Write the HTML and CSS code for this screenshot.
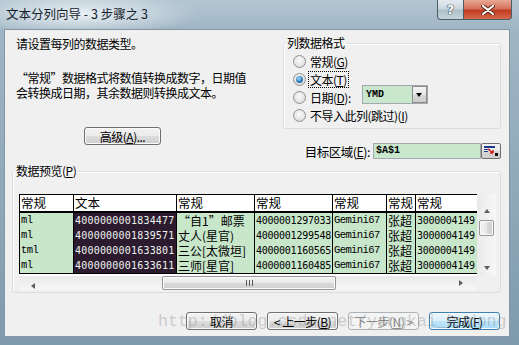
FILE: index.html
```html
<!DOCTYPE html>
<html lang="zh-CN">

<head>
  <meta charset="UTF-8" />
  <title>文本分列向导 - 3 步骤之 3</title>
  <link rel="stylesheet" href="styles.css">
</head>

<body>
  <div class="window">
    <div class="titlebar">
      <span class="title">文本分列向导 - 3 步骤之 3</span>
      <div class="caption">
        <span class="cap help">?</span>
        <span class="cap close">
          <svg width="14" height="10" viewBox="0 0 14 10">
            <path d="M2 1 L12 9 M12 1 L2 9" stroke="#5a2316" stroke-width="4" stroke-linecap="round" />
            <path d="M2 1 L12 9 M12 1 L2 9" stroke="#fff" stroke-width="2.2" stroke-linecap="round" />
          </svg>
        </span>
      </div>
    </div>

    <div class="client">
      <div class="top">
        <div class="left">
          <p class="hint">请设置每列的数据类型。</p>
          <p class="desc">“常规”数据格式将数值转换成数字，日期值<br>会转换成日期，其余数据则转换成文本。</p>
          <button class="btn advanced">高级(<u>A</u>)...</button>
        </div>

        <div class="right">
          <fieldset class="group format">
            <legend>列数据格式</legend>
            <label class="option"><span class="radio"></span>常规(<u>G</u>)</label>
            <label class="option"><span class="radio checked"></span><span class="focus">文本(<u>T</u>)</span></label>
            <label class="option">
              <span class="radio"></span><span class="date-label">日期(<u>D</u>):</span>
              <span class="combo"><span class="combo-value">YMD</span><span class="combo-btn"></span></span>
            </label>
            <label class="option"><span class="radio"></span>不导入此列(跳过)(<u>I</u>)</label>
          </fieldset>

          <div class="target">
            <span class="target-label">目标区域(<u>E</u>):</span>
            <span class="target-input">$A$1</span>
            <span class="collapse-btn">
              <svg width="14" height="10" viewBox="0 0 14 10">
                <rect x="0" y="0" width="11" height="2" fill="#1c3a86" />
                <rect x="0" y="3" width="6" height="1" fill="#1c3a86" />
                <rect x="0" y="5" width="4" height="1" fill="#1c3a86" />
                <path d="M4 3 L9 7 M9 7 L9 4 M9 7 L6 7" stroke="#d0201a" stroke-width="1.5" fill="none" />
                <rect x="11" y="7" width="3" height="3" fill="#111" />
              </svg>
            </span>
          </div>
        </div>
      </div>

      <fieldset class="group preview">
        <legend>数据预览(<u>P</u>)</legend>
        <div class="preview-box">
          <div class="table-area">
            <table class="data">
              <colgroup>
                <col style="width: 54px">
                <col style="width: 103px">
                <col style="width: 78px">
                <col style="width: 78px">
                <col style="width: 54px">
                <col style="width: 29px">
                <col style="width: 62px">
              </colgroup>
              <thead>
                <tr>
                  <th>常规</th>
                  <th>文本</th>
                  <th>常规</th>
                  <th>常规</th>
                  <th>常规</th>
                  <th>常规</th>
                  <th>常规</th>
                </tr>
              </thead>
              <tbody>
                <tr>
                  <td class="mono">ml</td>
                  <td class="sel">4000000001834477</td>
                  <td class="cjk">“自1”邮票</td>
                  <td>4000001297033</td>
                  <td class="mono">Gemini67</td>
                  <td class="cjk">张超</td>
                  <td>3000004149</td>
                </tr>
                <tr>
                  <td class="mono">ml</td>
                  <td class="sel">4000000001839571</td>
                  <td class="cjk">丈人(星官)</td>
                  <td>4000001299548</td>
                  <td class="mono">Gemini67</td>
                  <td class="cjk">张超</td>
                  <td>3000004149</td>
                </tr>
                <tr>
                  <td class="mono">tml</td>
                  <td class="sel">4000000001633801</td>
                  <td class="cjk">三公[太微垣]</td>
                  <td>4000001160565</td>
                  <td class="mono">Gemini67</td>
                  <td class="cjk">张超</td>
                  <td>3000004149</td>
                </tr>
                <tr>
                  <td class="mono">ml</td>
                  <td class="sel">4000000001633611</td>
                  <td class="cjk">三师[星官]</td>
                  <td>4000001160485</td>
                  <td class="mono">Gemini67</td>
                  <td class="cjk">张超</td>
                  <td>3000004149</td>
                </tr>
              </tbody>
            </table>
          </div>

          <div class="vscroll">
            <span class="arrow-btn up"><span class="tri tri-up"></span></span>
            <span class="vtrack"><span class="vthumb"></span></span>
            <span class="arrow-btn down"><span class="tri tri-down"></span></span>
          </div>

          <div class="hscroll">
            <span class="arrow-btn left"><span class="tri tri-left"></span></span>
            <span class="htrack"><span class="hthumb"><span class="grip"></span></span></span>
            <span class="arrow-btn right"><span class="tri tri-right"></span></span>
          </div>
          <div class="corner"></div>
        </div>
      </fieldset>

      <div class="actions">
        <button class="btn">取消</button>
        <button class="btn">&lt; 上一步(<u>B</u>)</button>
        <button class="btn" disabled>下一步(<u>N</u>) &gt;</button>
        <button class="btn default">完成(<u>F</u>)</button>
      </div>
    </div>

    <div class="watermark">http://blog.csdn.net/yangkai_hudong</div>
  </div>
</body>

</html>
```

FILE: styles.css
```css
* {
  box-sizing: border-box;
}

body {
  margin: 0;
  font-family: "Noto Sans CJK SC", "Noto Sans", sans-serif;
  font-size: 12px;
  color: #000;
  background: #8aa3b4;
}

.window {
  position: relative;
  width: 519px;
  height: 345px;
  overflow: hidden;
  background:
    radial-gradient(ellipse 120px 22px at 80px 14px, rgba(240, 245, 248, 0.9) 0%, rgba(240, 245, 248, 0) 100%),
    linear-gradient(180deg, #b4c6d2 0%, #9fb5c4 9%, #8ea8b9 60%, #7d99ab 100%);
}

/* title bar */

.titlebar {
  height: 29px;
  display: flex;
  align-items: flex-start;
  padding-left: 6px;
}

.title {
  margin-top: 6px;
  line-height: 16px;
  font-size: 12.5px;
  color: #16222c;
}

.caption {
  margin-left: auto;
  margin-right: 7px;
  display: flex;
}

.cap {
  height: 20px;
  display: flex;
  align-items: center;
  justify-content: center;
  border: 1px solid #4b5d69;
  border-top: none;
}

.help {
  width: 27px;
  border-radius: 0 0 0 4px;
  background: linear-gradient(180deg, #e3eaee 0%, #cad6dd 48%, #adbec8 52%, #c6d4dc 100%);
  font: bold 13px "DejaVu Sans", sans-serif;
  color: #fff;
  text-shadow: 0 0 1px #2d3b44, 0 0 1px #2d3b44, 0 0 1px #2d3b44;
}

.close {
  width: 48px;
  border-left: none;
  border-radius: 0 0 4px 0;
  background: linear-gradient(180deg, #e7a897 0%, #d66e56 48%, #c23a20 52%, #d66a4c 100%);
}

/* dialog body */

.client {
  margin-left: 4px;
  width: 506px;
  height: 308px;
  border: 1px solid #8596a2;
  background: #f0f0f0;
  letter-spacing: -0.5px;
}

.top {
  display: flex;
  height: 134px;
}

.left {
  width: 270px;
  padding: 6px 0 0 11px;
}

.hint {
  margin: 0;
  line-height: 16px;
}

.desc {
  margin: 18px 0 0;
  line-height: 15px;
}

.right {
  margin-left: auto;
  margin-right: 8px;
  width: 218px;
  display: flex;
  flex-direction: column;
  align-items: flex-end;
}

.group {
  margin: 0;
  border: 1px solid #d5dfe5;
  border-radius: 3px;
  box-shadow: inset 1px 1px 0 #fff;
}

.group legend {
  padding: 0 2px;
  line-height: 14px;
}

.format {
  width: 218px;
  margin-top: 6px;
  padding: 2px 0 4px 9px;
}

.format legend {
  margin-left: -8px;
}

.option {
  display: flex;
  align-items: center;
  height: 18px;
}

.radio {
  position: relative;
  width: 13px;
  height: 13px;
  margin-right: 4px;
  border-radius: 50%;
  border: 1px solid #929292;
  background: radial-gradient(circle at 50% 40%, #fbfbfb 0%, #e4e4e4 60%, #cfcfcf 100%);
}

.radio.checked::after {
  content: '';
  position: absolute;
  left: 2px;
  top: 2px;
  width: 7px;
  height: 7px;
  border-radius: 50%;
  background: radial-gradient(circle at 40% 35%, #a9dcf8 0%, #3784c2 50%, #14477a 100%);
}

.focus {
  outline: 1px dotted #000;
  outline-offset: 0;
  padding: 0 1px;
  margin-left: -1px;
  line-height: 15px;
}

.date-label {
  width: 52px;
}

.combo {
  display: flex;
  width: 66px;
  height: 19px;
  margin-top: -5px;
  border: 1px solid #a3a9b0;
  background: #c9e7cc;
  letter-spacing: 0;
}

.combo-value {
  flex: 1;
  padding-left: 3px;
  font: bold 10px/17px "Liberation Mono", monospace;
}

.combo-btn {
  position: relative;
  width: 15px;
  border: 1px solid #8c8c8c;
  background: linear-gradient(180deg, #f4f4f4 0%, #e6e6e6 50%, #d6d6d6 51%, #cdcdcd 100%);
}

.combo-btn::after {
  content: '';
  position: absolute;
  left: 3px;
  top: 6px;
  border-left: 3.5px solid transparent;
  border-right: 3.5px solid transparent;
  border-top: 4px solid #000;
}

.target {
  margin-top: 14px;
  display: flex;
  align-items: center;
  height: 16px;
}

.target-label {
  margin-right: 3px;
  font-size: 12.5px;
}

.target-input {
  width: 108px;
  height: 16px;
  padding-left: 2px;
  border: 1px solid #a3a9b0;
  background: #c9e7cc;
  font: bold 10px/14px "Liberation Mono", monospace;
  letter-spacing: 0;
}

.collapse-btn {
  width: 20px;
  height: 16px;
  display: flex;
  align-items: center;
  justify-content: center;
  border: 1px solid #707070;
  border-radius: 2px;
  background: linear-gradient(180deg, #f4f4f4 0%, #e8e8e8 50%, #d8d8d8 51%, #cdcdcd 100%);
}

/* preview */

.preview {
  width: 489px;
  margin-left: 7px;
  padding: 16px 0 2px 6px;
}

.preview legend {
  margin-left: -5px;
}

.preview-box {
  display: grid;
  grid-template-columns: 458px 19px;
  grid-template-rows: 82px 14px;
}

.table-area {
  background: #fff;
  overflow: hidden;
}

.data {
  width: 458px;
  table-layout: fixed;
  border-collapse: collapse;
  letter-spacing: 0;
}

.data th,
.data td {
  padding: 0 0 0 1px;
  border-left: 1px solid #000;
  border-right: 1px solid #000;
  white-space: nowrap;
  overflow: hidden;
  text-align: left;
}

.data th {
  height: 17px;
  border-top: 1px solid #000;
  border-bottom: 2px solid #000;
  font-weight: normal;
  font-size: 12.5px;
  line-height: 15px;
  background: #fff;
}

.data td {
  height: 15px;
  background: #c8e6ca;
  font: 10px/15px "DejaVu Sans Mono", monospace;
  letter-spacing: -0.25px;
}

.data tbody tr:last-child td {
  border-bottom: 1px solid #000;
}

.data td.mono {
  font: 10.5px/15px "Liberation Mono", monospace;
  letter-spacing: -0.6px;
}

.data td.cjk {
  font: 12px/15px "Noto Sans CJK SC", sans-serif;
  letter-spacing: 0;
}

.data td.sel {
  background: #2c1b2e;
  color: #eef3ee;
  letter-spacing: 0.2px;
}

/* scrollbars */

.vscroll {
  display: flex;
  flex-direction: column;
  background: linear-gradient(90deg, #e9e9e9 0%, #f7f7f7 100%);
}

.hscroll {
  display: flex;
  background: linear-gradient(180deg, #e9e9e9 0%, #f7f7f7 100%);
}

.corner {
  background: #f0f0f0;
}

.arrow-btn {
  display: flex;
  align-items: center;
  justify-content: center;
}

.vscroll .up {
  height: 25px;
  padding-top: 9px;
}

.vscroll .down {
  height: 17px;
}

.hscroll .arrow-btn {
  width: 17px;
}

.vtrack {
  flex: 1;
  padding: 1px 0 0 2px;
}

.vthumb {
  display: block;
  width: 15px;
  height: 16px;
  border: 1px solid #979797;
  border-radius: 2px;
  background: linear-gradient(90deg, #f3f3f3 0%, #e9e9e9 50%, #d9d9d9 51%, #d0d0d0 100%);
  box-shadow: inset 0 0 0 1px #fbfbfb;
}

.htrack {
  flex: 1;
}

.hthumb {
  display: flex;
  align-items: center;
  justify-content: center;
  width: 174px;
  height: 14px;
  margin-left: 126px;
  border: 1px solid #979797;
  border-radius: 2px;
  background: linear-gradient(180deg, #f3f3f3 0%, #e9e9e9 50%, #d9d9d9 51%, #d0d0d0 100%);
  box-shadow: inset 0 0 0 1px #fbfbfb;
}

.grip {
  width: 7px;
  height: 6px;
  background: repeating-linear-gradient(90deg, #5a5a5a 0, #5a5a5a 1px, transparent 1px, transparent 3px);
}

.tri {
  width: 0;
  height: 0;
}

.tri-up {
  border-left: 3.5px solid transparent;
  border-right: 3.5px solid transparent;
  border-bottom: 4px solid #5d5d5d;
}

.tri-down {
  border-left: 3.5px solid transparent;
  border-right: 3.5px solid transparent;
  border-top: 4px solid #5d5d5d;
}

.tri-left {
  border-top: 3.5px solid transparent;
  border-bottom: 3.5px solid transparent;
  border-right: 4px solid #5d5d5d;
}

.tri-right {
  border-top: 3.5px solid transparent;
  border-bottom: 3.5px solid transparent;
  border-left: 4px solid #5d5d5d;
}

/* buttons */

.btn {
  height: 18px;
  width: 71px;
  padding: 0;
  border: 1px solid #707070;
  border-radius: 3px;
  background: linear-gradient(180deg, #f2f2f2 0%, #ebebeb 50%, #dddddd 51%, #cfcfcf 100%);
  box-shadow: inset 0 0 0 1px #fafafa;
  font-family: "Noto Sans CJK SC", sans-serif;
  font-size: 12px;
  line-height: 15px;
  letter-spacing: -0.5px;
  color: #000;
}

.advanced {
  display: block;
  width: 77px;
  margin: 27px 0 0 68px;
}

.btn.default {
  border-color: #3c7fb1;
  background: linear-gradient(180deg, #eaf6fd 0%, #d9f0fc 50%, #bee6fd 51%, #a7d9f5 100%);
}

.btn:disabled {
  border-color: #adb2b5;
  background: #f4f4f4;
  box-shadow: none;
  color: #8a8a8a;
}

.actions {
  display: flex;
  justify-content: flex-end;
  gap: 10px;
  margin-top: 19px;
  padding-right: 9px;
}

.watermark {
  position: absolute;
  left: 158px;
  top: 312px;
  font: 16.6px/20px "Liberation Mono", monospace;
  color: rgba(130, 130, 130, 0.35);
  pointer-events: none;
  white-space: nowrap;
}
```
